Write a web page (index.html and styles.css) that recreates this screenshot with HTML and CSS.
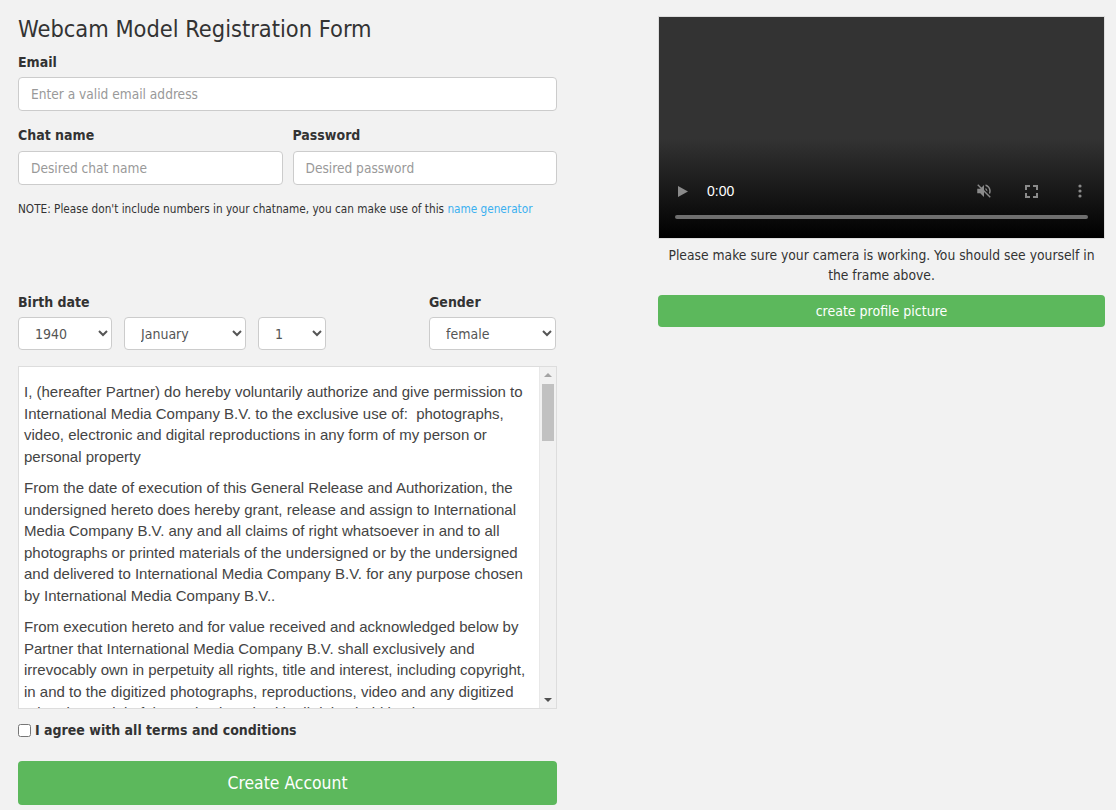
FILE: index.html
```html
<!DOCTYPE html>
<html lang="en">
<head>
  <meta charset="UTF-8"/>
  <meta name="viewport" content="width=device-width, initial-scale=1.0"/>
  <title>Webcam Model Registration</title>
  <link rel="stylesheet" href="styles.css">
</head>
<body>

  <div class="page">

    <form class="reg-form" onsubmit="return false">
      <h1 class="title">Webcam Model Registration Form</h1>

      <label class="field-label" for="email">Email</label>
      <input class="text-input" id="email" type="email" placeholder="Enter a valid email address">

      <div class="field-row">
        <div class="field">
          <label class="field-label" for="chatname">Chat name</label>
          <input class="text-input" id="chatname" type="text" placeholder="Desired chat name">
        </div>
        <div class="field">
          <label class="field-label" for="password">Password</label>
          <input class="text-input" id="password" type="password" placeholder="Desired password">
        </div>
      </div>

      <p class="note">NOTE: Please don't include numbers in your chatname, you can make use of this <a href="#">name generator</a></p>

      <div class="birth-row">
        <div class="field">
          <span class="field-label">Birth date</span>
          <div class="date-selects">
            <select class="sel sel-year">
              <option>1940</option>
              <option>1941</option>
              <option>1942</option>
            </select>
            <select class="sel sel-month">
              <option>January</option>
              <option>February</option>
              <option>March</option>
            </select>
            <select class="sel sel-day">
              <option>1</option>
              <option>2</option>
              <option>3</option>
            </select>
          </div>
        </div>
        <div class="field gender">
          <label class="field-label" for="gender">Gender</label>
          <select class="sel sel-gender" id="gender">
            <option>female</option>
            <option>male</option>
          </select>
        </div>
      </div>

      <div class="terms">
        <div class="terms-text">
          <p>I, (hereafter Partner) do hereby voluntarily authorize and give permission to International Media Company B.V. to the exclusive use of:&nbsp; photographs, video, electronic and digital reproductions in any form of my person or personal property</p>
          <p>From the date of execution of this General Release and Authorization, the undersigned hereto does hereby grant, release and assign to International Media Company B.V. any and all claims of right whatsoever in and to all photographs or printed materials of the undersigned or by the undersigned and delivered to International Media Company B.V. for any purpose chosen by International Media Company B.V..</p>
          <p>From execution hereto and for value received and acknowledged below by Partner that International Media Company B.V. shall exclusively and irrevocably own in perpetuity all rights, title and interest, including copyright, in and to the digitized photographs, reproductions, video and any digitized printed material of the undersigned, with all rights held by the owner.</p>
        </div>
        <div class="scrollbar">
          <span class="sb-btn sb-up"></span>
          <span class="sb-thumb"></span>
          <span class="sb-track"></span>
          <span class="sb-btn sb-down"></span>
        </div>
      </div>

      <label class="agree">
        <input type="checkbox">
        <span>I agree with all terms and conditions</span>
      </label>

      <button class="btn btn-big" type="submit">Create Account</button>
    </form>

    <div class="camera">
      <div class="video">
        <div class="video-controls">
          <div class="ctrl-row">
            <svg class="ico play" width="12" height="13" viewBox="0 0 12 13"><path d="M1 1 L11 6.5 L1 12 Z" fill="#8a8a8a"/></svg>
            <span class="time">0:00</span>
            <span class="spacer"></span>
            <svg class="ico mute" width="18" height="18" viewBox="0 0 24 24">
              <path d="M3 9v6h4l5 5V4L7 9H3z" fill="#8a8a8a"/>
              <path d="M16.5 12c0-1.8-1-3.3-2.5-4v2.2l2.5 2.5V12zM19 12c0 .9-.2 1.8-.5 2.6l1.5 1.5C20.6 14.9 21 13.5 21 12c0-4.3-3-7.9-7-8.8v2.1c2.9.9 5 3.5 5 6.7z" fill="#8a8a8a"/>
              <path d="M4.3 3L3 4.3 19.7 21 21 19.7z" fill="#8a8a8a"/>
            </svg>
            <svg class="ico full" width="13" height="13" viewBox="0 0 13 13" fill="none" stroke="#8a8a8a" stroke-width="2">
              <path d="M1 5V1h4M8 1h4v4M12 8v4H8M5 12H1V8"/>
            </svg>
            <svg class="ico dots" width="4" height="14" viewBox="0 0 4 14">
              <circle cx="2" cy="2" r="1.6" fill="#8a8a8a"/>
              <circle cx="2" cy="7" r="1.6" fill="#8a8a8a"/>
              <circle cx="2" cy="12" r="1.6" fill="#8a8a8a"/>
            </svg>
          </div>
          <div class="progress"></div>
        </div>
      </div>
      <p class="cam-hint">Please make sure your camera is working. You should see yourself in the frame above.</p>
      <button class="btn btn-small" type="button">create profile picture</button>
    </div>

  </div>

</body>
</html>
```

FILE: styles.css
```css
:root {
  --green: #5cb85c;
  --border: #ccc;
  --text: #333;
}

* {
  box-sizing: border-box;
}

body {
  margin: 0;
  background: #f2f2f2;
  font-family: 'DejaVu Sans Condensed', 'DejaVu Sans', sans-serif;
  font-stretch: condensed;
  color: var(--text);
}

.page {
  display: grid;
  grid-template-columns: 539px 447px;
  column-gap: 101px;
  padding: 0 18px;
}

/* left column: the form */

.reg-form {
  display: flex;
  flex-direction: column;
}

.title {
  margin: 12px 0 0;
  font-size: 23.4px;
  font-weight: normal;
  line-height: 34px;
  color: #333;
}

.field-label {
  display: block;
  font-size: 14px;
  font-weight: bold;
  line-height: 20px;
  margin-bottom: 5px;
  color: #333;
}

.title + .field-label {
  margin-top: 6px;
}

.text-input {
  width: 100%;
  height: 34px;
  padding: 0 12px;
  border: 1px solid var(--border);
  border-radius: 4px;
  background: #fff;
  font-family: inherit;
  font-size: 13.6px;
  color: #555;
}

.text-input::placeholder {
  color: #999;
}

.field-row {
  display: flex;
  gap: 10px;
  margin-top: 14px;
}

.field-row .field {
  flex: 1;
}

.field-row .field-label {
  margin-bottom: 6px;
}

.note {
  margin: 15px 0 0;
  font-size: 11.7px;
  line-height: 18px;
}

.note a {
  color: #3bb0f0;
  text-decoration: none;
}

.birth-row {
  display: flex;
  justify-content: space-between;
  margin-top: 74px;
}

.date-selects {
  display: flex;
  gap: 12px;
}

.sel {
  height: 33px;
  padding: 0 8px 0 12px;
  border: 1px solid var(--border);
  border-radius: 4px;
  background: #fff;
  font-family: inherit;
  font-size: 14px;
  color: #555;
}

.sel-year { width: 94px; }
.sel-month { width: 122px; }
.sel-day { width: 68px; }
.sel-gender { width: 127px; }

.gender {
  width: 128px;
}

/* box with the release text and its scrollbar */

.terms {
  display: flex;
  height: 343px;
  margin-top: 16px;
  background: #fff;
  border: 1px solid #ddd;
}

.terms-text {
  flex: 1;
  overflow: hidden;
  padding: 4px 8px 0 5px;
  font-family: 'Liberation Sans', Arial, sans-serif;
  font-stretch: normal;
  font-size: 15px;
  line-height: 21.5px;
  color: #444;
}

.terms-text p {
  margin: 10px 0;
}

.scrollbar {
  width: 17px;
  display: flex;
  flex-direction: column;
  background: #f1f1f1;
  border-left: 1px solid #e8e8e8;
}

.sb-btn {
  height: 16px;
  display: flex;
  align-items: center;
  justify-content: center;
}

.sb-btn::before {
  content: '';
  border-left: 4px solid transparent;
  border-right: 4px solid transparent;
}

.sb-up::before {
  border-bottom: 4px solid #a3a3a3;
}

.sb-down::before {
  border-top: 4px solid #505050;
}

.sb-thumb {
  height: 57px;
  margin: 1px 2px 0;
  background: #c1c1c1;
}

.sb-track {
  flex: 1;
}

.agree {
  display: flex;
  align-items: center;
  gap: 4px;
  margin-top: 11px;
  height: 20px;
  font-size: 14px;
  font-weight: bold;
  color: #333;
}

.agree input {
  margin: 0;
  width: 13px;
  height: 13px;
}

.btn {
  border: none;
  border-radius: 4px;
  background: var(--green);
  color: #fff;
  font-family: inherit;
  font-stretch: condensed;
  cursor: pointer;
}

.btn-big {
  height: 44px;
  margin-top: 21px;
  font-size: 17.4px;
}

/* right column: camera preview */

.camera {
  display: flex;
  flex-direction: column;
  padding-top: 16px;
}

.video {
  height: 223px;
  border: 1px solid #ddd;
  background: linear-gradient(to bottom, #333 0, #333 55%, #000 100%);
  display: flex;
  flex-direction: column;
  justify-content: flex-end;
}

.video-controls {
  padding: 0 16px 19px 16px;
}

.ctrl-row {
  display: flex;
  align-items: center;
  height: 20px;
}

.ico.play {
  margin-left: 2px;
  margin-right: 18px;
}

.time {
  font-family: 'Liberation Sans', Arial, sans-serif;
  font-stretch: normal;
  font-size: 14px;
  color: #fff;
}

.spacer {
  flex: 1;
}

.ctrl-row .full {
  margin-left: 32px;
}

.ctrl-row .dots {
  margin-left: 40px;
  margin-right: 6px;
}

.progress {
  height: 4px;
  margin-top: 14px;
  border-radius: 2px;
  background: #6e6e6e;
}

.cam-hint {
  margin: 6px 0 0;
  font-size: 13.75px;
  line-height: 20px;
  text-align: center;
}

.btn-small {
  height: 32px;
  margin-top: 10px;
  font-size: 14px;
}
```
